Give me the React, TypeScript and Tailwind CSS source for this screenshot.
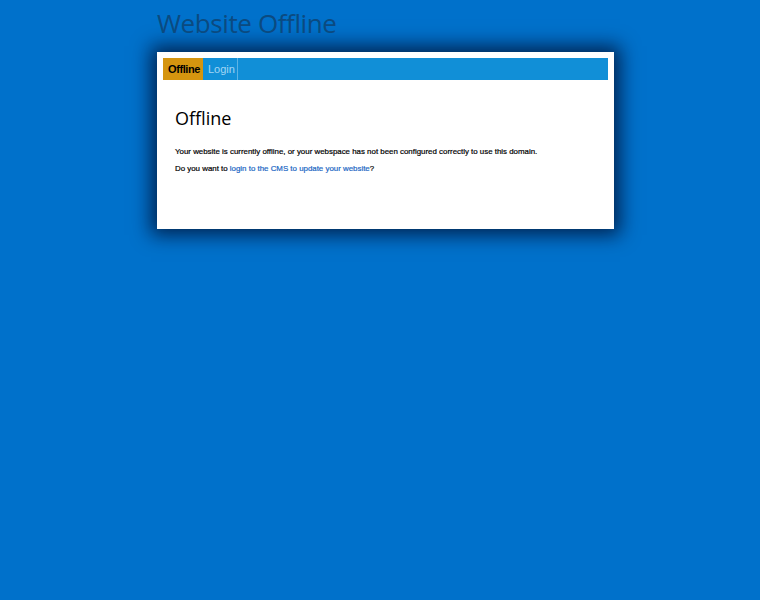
export default function App() {
  return (
    <div className="min-h-[600px] w-full bg-[#0071cb]">
      <div className="ml-[157px] w-[457px]">
        <h1 className="pt-[6px] h-[52px] text-[26px] leading-[34px] text-[#0b4a80] font-medium font-['Open_Sans',sans-serif] tracking-[-0.4px]">
          Website Offline
        </h1>
        <div className="bg-white shadow-[0_0_18px_6px_rgba(0,10,40,0.75)] p-[6px] h-[177px]">
          <div className="flex h-[22px] bg-[#118fd7] font-['Liberation_Sans',sans-serif] text-[11px] leading-[22px]">
            <div className="px-[5px] bg-[#d5950f] text-black font-bold tracking-[-0.4px] w-[40px]">Offline</div>
            <div className="px-[5px] text-[#a3d6f4] border-r border-[#5db4e6] w-[35px]">Login</div>
          </div>
          <div className="px-[12px] pt-[27px] font-['Liberation_Sans',sans-serif]">
            <h2 className="text-[18px] leading-[22px] text-black font-medium font-['Open_Sans',sans-serif]">Offline</h2>
            <p className="mt-[17px] text-[7.9px] leading-[11px] font-normal text-black [-webkit-text-stroke:0.2px_#000]">
              Your website is currently offline, or your webspace has not been configured correctly to use this domain.
            </p>
            <p className="mt-[6px] text-[7.9px] leading-[11px] font-normal text-black [-webkit-text-stroke:0.2px_#000]">
              Do you want to <a className="text-[#1a66c4] [-webkit-text-stroke:0.2px_#1a66c4]" href="#">login to the CMS to update your website</a>?
            </p>
          </div>
        </div>
      </div>
    </div>
  );
}
